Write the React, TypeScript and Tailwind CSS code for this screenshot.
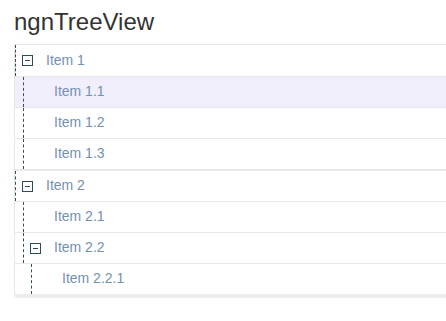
import React from 'react'

interface Row {
  label: string
  depth: number
  open?: boolean
  active?: boolean
  groupEnd?: boolean
}

// flattened tree, each row knows its depth
const rows: Row[] = [
  { label: 'Item 1', depth: 0, open: true },
  { label: 'Item 1.1', depth: 1, active: true },
  { label: 'Item 1.2', depth: 1 },
  { label: 'Item 1.3', depth: 1, groupEnd: true },
  { label: 'Item 2', depth: 0, open: true },
  { label: 'Item 2.1', depth: 1 },
  { label: 'Item 2.2', depth: 1, open: true },
  { label: 'Item 2.2.1', depth: 2 },
]

const indent = ['ml-0', 'ml-[8px]', 'ml-[16px]']

function MinusBox() {
  return (
    <span className="flex h-[11px] w-[11px] items-center justify-center border border-[#2f4b5b]">
      <span className="h-px w-[5px] bg-[#2f4b5b]" />
    </span>
  )
}

export default function App() {
  return (
    <div className="h-[321px] w-[446px] overflow-hidden bg-white font-['Liberation_Sans',Arial,sans-serif]">
      <h3 className="ml-[14px] pt-[9px] text-[24px] leading-[26px] text-[#333]">ngnTreeView</h3>
      <div className="ml-[14px] mt-[9px] w-[450px] rounded-b-[4px] border border-b-4 border-[#e6e6e6] border-b-[#ececec]">
        {rows.map((r, i) => (
          <div
            key={r.label}
            className={
              'flex ' +
              (i > 0 ? 'border-t border-[#e9e9e9] ' : '') +
              (r.groupEnd ? 'h-[32px] border-b border-b-[#e9e9e9] ' : 'h-[31px] ') +
              (r.active ? 'bg-[#f2effd]' : 'bg-white')
            }
          >
            <div className={'flex h-full items-center border-l border-dashed border-[#34505f] ' + indent[r.depth]}>
              <div className="flex w-[30px] justify-start pl-[6px]">{r.open && <MinusBox />}</div>
              <span className="pb-px text-[14px] text-[#7391b0]">{r.label}</span>
            </div>
          </div>
        ))}
      </div>
    </div>
  )
}
